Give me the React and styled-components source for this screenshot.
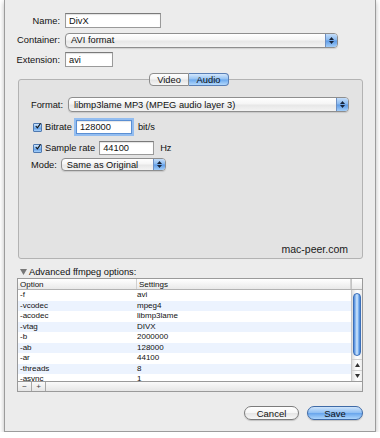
import styled, { createGlobalStyle } from "styled-components";

const GlobalStyle = createGlobalStyle`
  html, body {
    margin: 0;
    padding: 0;
    background: #ffffff;
  }
  body {
    font-family: "Liberation Sans", Arial, sans-serif;
    font-size: 9.3px;
    color: #111;
  }
`;

const Window = styled.div`
  margin-left: 4px;
  width: 370px;
  background: #ececec;
  border: 1px solid #9c9c9c;
  border-top: none;
  box-shadow: 0 2px 5px rgba(0, 0, 0, 0.28);
  padding: 13px 0 11px;
  display: flex;
  flex-direction: column;
`;

const FormGrid = styled.div`
  display: grid;
  grid-template-columns: 55px auto;
  column-gap: 5px;
  row-gap: 4.5px;
  align-items: center;
  justify-items: start;
`;

const Label = styled.label`
  justify-self: end;
  white-space: nowrap;
`;

const TextField = styled.div`
  box-sizing: border-box;
  width: ${(p) => p.$w}px;
  height: ${(p) => p.$h || 15}px;
  background: #fff;
  border: 1px solid #9a9a9a;
  border-top-color: #7a7a7a;
  box-shadow: inset 0 1px 1px rgba(0, 0, 0, 0.12);
  padding-left: 3px;
  display: flex;
  align-items: center;
  ${(p) =>
    p.$focus &&
    `
    border-color: #5b8fd3;
    box-shadow: 0 0 0 2px #93bdf0, inset 0 1px 1px rgba(0,0,0,0.1);
  `}
`;

const PopUp = styled.div`
  box-sizing: border-box;
  width: ${(p) => p.$w}px;
  height: ${(p) => p.$h || 15}px;
  border: 1px solid #8e8e8e;
  border-radius: 4px;
  background: linear-gradient(#ffffff, #f5f5f5 45%, #e7e7e7 55%, #f3f3f3);
  box-shadow: 0 1px 1px rgba(0, 0, 0, 0.12);
  display: flex;
  align-items: stretch;
  overflow: hidden;
`;

const PopText = styled.span`
  flex: 1;
  padding-left: 5px;
  display: flex;
  align-items: center;
  white-space: nowrap;
`;

const PopCap = styled.span`
  width: 11px;
  border-left: 1px solid #6d8fc2;
  background: linear-gradient(#c4ddf9, #86b8f0 48%, #5d9ae6 52%, #a2cdf8);
  display: flex;
  flex-direction: column;
  align-items: center;
  justify-content: center;
  gap: 1px;
`;

const Arrows = () => (
  <>
    <svg width="5" height="3" viewBox="0 0 5 3">
      <path d="M2.5 0 L5 3 L0 3 Z" fill="#17243a" />
    </svg>
    <svg width="5" height="3" viewBox="0 0 5 3">
      <path d="M0 0 L5 0 L2.5 3 Z" fill="#17243a" />
    </svg>
  </>
);

const Select = ({ w, h, children }) => (
  <PopUp $w={w} $h={h}>
    <PopText>{children}</PopText>
    <PopCap>
      <Arrows />
    </PopCap>
  </PopUp>
);

const TabGroup = styled.div`
  margin: 6px 12px 0 13px;
  display: flex;
  flex-direction: column;
`;

const TabBar = styled.div`
  display: flex;
  justify-content: center;
  margin-bottom: -7px;
  position: relative;
  z-index: 1;
  padding-right: 3px;
`;

const Tab = styled.div`
  box-sizing: border-box;
  width: 40px;
  height: 13px;
  display: flex;
  align-items: center;
  justify-content: center;
  border: 1px solid ${(p) => (p.$active ? "#5a7fb5" : "#8c8c8c")};
  border-radius: ${(p) => (p.$active ? "0 4px 4px 0" : "4px 0 0 4px")};
  background: ${(p) =>
    p.$active
      ? "linear-gradient(#d3e7fc, #92c1f3 48%, #6ba8ed 52%, #b2d8fc)"
      : "linear-gradient(#ffffff, #f3f3f3 48%, #e3e3e3 52%, #f5f5f5)"};
  ${(p) => p.$active && "border-left: none;"}
`;

const TabBox = styled.div`
  box-sizing: border-box;
  height: 180px;
  border: 1px solid #b3b3b3;
  border-radius: 3px;
  background: #e3e3e3;
  padding: 17px 13px 2px 12px;
  display: flex;
  flex-direction: column;
`;

const Row = styled.div`
  display: flex;
  align-items: center;
  gap: ${(p) => p.$gap ?? 4}px;
  margin-top: ${(p) => p.$mt || 0}px;
  padding-left: ${(p) => p.$pl || 0}px;
`;

const Unit = styled.span`
  margin-left: 2px;
`;

const Check = styled.span`
  box-sizing: border-box;
  width: 9px;
  height: 9px;
  border: 1px solid #4f79b0;
  border-radius: 1px;
  background: linear-gradient(#cfe5fc, #7fb5ef 50%, #5d9ae6 55%, #a6d0f8);
  display: flex;
  align-items: center;
  justify-content: center;
  margin-right: -1px;
`;

const CheckMark = () => (
  <Check>
    <svg width="8" height="8" viewBox="0 0 8 8" style={{ marginTop: -2, marginLeft: 1 }}>
      <path d="M1 4 L3.2 6.5 L7.5 0.5" stroke="#111" strokeWidth="1.5" fill="none" />
    </svg>
  </Check>
);

const Watermark = styled.div`
  margin-top: auto;
  align-self: flex-end;
  font-size: 10.5px;
  color: #1a1a1a;
  margin-right: 1px;
  padding-bottom: 1px;
`;

const Disclosure = styled.div`
  margin: 7px 0 1px 15px;
  height: 11px;
  display: flex;
  align-items: center;
  gap: 2px;
`;

const TableFrame = styled.div`
  margin: 0 12px 0 12px;
  border: 1px solid #9a9a9a;
  background: #fff;
  display: flex;
  flex-direction: column;
`;

const HeadRow = styled.div`
  display: flex;
  height: 10px;
  border-bottom: 1px solid #b2b2b2;
  background: linear-gradient(#ffffff, #f4f4f4 50%, #e9e9e9);
  font-size: 8px;
`;

const HeadCell = styled.div`
  box-sizing: border-box;
  width: ${(p) => (p.$w ? `${p.$w}px` : "auto")};
  flex: ${(p) => (p.$w ? "none" : 1)};
  padding-left: 2px;
  display: flex;
  align-items: center;
  border-right: 1px solid #d0d0d0;
`;

const Corner = styled.div`
  width: 10px;
  border-left: 1px solid #c4c4c4;
`;

const ListArea = styled.div`
  display: flex;
  height: 91px;
  overflow: hidden;
`;

const Rows = styled.div`
  flex: 1;
  overflow: hidden;
`;

const DataRow = styled.div`
  display: grid;
  grid-template-columns: 117px 1fr;
  height: 10.5px;
  line-height: 10.5px;
  font-size: 8px;
  background: ${(p) => (p.$alt ? "#ecf3fe" : "#ffffff")};
  padding-left: 2px;
`;

const Scrollbar = styled.div`
  width: 10px;
  display: flex;
  flex-direction: column;
  border-left: 1px solid #c8c8c8;
  background: linear-gradient(90deg, #dedede, #f7f7f7 35%, #ffffff 60%, #ececec);
`;

const Track = styled.div`
  flex: 1;
  padding: 3px 1px 0;
`;

const Thumb = styled.div`
  height: 61px;
  border-radius: 5px;
  border: 1px solid #3c6fb8;
  background: linear-gradient(90deg, #4a86da, #a7cdf6 35%, #d6e9fc 50%, #7fb3ef 75%, #3f7dd2);
`;

const ScrollButton = styled.div`
  height: 10px;
  display: flex;
  align-items: center;
  justify-content: center;
  border-top: 1px solid #d0d0d0;
`;

const Footer = styled.div`
  height: 9px;
  border-top: 1px solid #9a9a9a;
  background: linear-gradient(#fafafa, #e6e6e6);
  display: flex;
`;

const FootButton = styled.div`
  width: 13px;
  border-right: 1px solid #a8a8a8;
  display: flex;
  align-items: center;
  justify-content: center;
  font-size: 8px;
  color: #444;
`;

const ButtonRow = styled.div`
  margin: 14px 12px 0 0;
  display: flex;
  justify-content: flex-end;
  gap: 8px;
`;

const PushButton = styled.div`
  box-sizing: border-box;
  width: ${(p) => p.$w}px;
  height: 14px;
  border-radius: 7px;
  display: flex;
  align-items: center;
  justify-content: center;
  font-size: 9.5px;
  border: 1px solid ${(p) => (p.$primary ? "#3f6aa6" : "#7c7c7c")};
  background: ${(p) =>
    p.$primary
      ? "linear-gradient(#cfe4fb, #8fbff3 48%, #68a5ec 52%, #acd5fc)"
      : "linear-gradient(#ffffff, #f6f6f6 48%, #e5e5e5 52%, #f8f8f8)"};
  box-shadow: 0 1px 1px rgba(0, 0, 0, 0.18);
`;

const options = [
  ["-f", "avi"],
  ["-vcodec", "mpeg4"],
  ["-acodec", "libmp3lame"],
  ["-vtag", "DIVX"],
  ["-b", "2000000"],
  ["-ab", "128000"],
  ["-ar", "44100"],
  ["-threads", "8"],
  ["-async", "1"],
];

export default function App() {
  return (
    <>
      <GlobalStyle />
      <Window>
        <FormGrid>
          <Label>Name:</Label>
          <TextField $w={96}>DivX</TextField>
          <Label>Container:</Label>
          <Select w={273}>AVI format</Select>
          <Label>Extension:</Label>
          <TextField $w={48}>avi</TextField>
        </FormGrid>

        <TabGroup>
          <TabBar>
            <Tab>Video</Tab>
            <Tab $active>Audio</Tab>
          </TabBar>
          <TabBox>
            <Row $gap={5}>
              <span>Format:</span>
              <Select w={284}>libmp3lame MP3 (MPEG audio layer 3)</Select>
            </Row>
            <Row $mt={8} $pl={2}>
              <CheckMark />
              <span>Bitrate</span>
              <TextField $w={56} $h={14} $focus>
                128000
              </TextField>
              <Unit>bit/s</Unit>
            </Row>
            <Row $mt={7} $pl={2}>
              <CheckMark />
              <span>Sample rate</span>
              <TextField $w={55} $h={14}>
                44100
              </TextField>
              <Unit>Hz</Unit>
            </Row>
            <Row $mt={3} $gap={4}>
              <span>Mode:</span>
              <Select w={105} h={13}>
                Same as Original
              </Select>
            </Row>
            <Watermark>mac-peer.com</Watermark>
          </TabBox>
        </TabGroup>

        <Disclosure>
          <svg width="7" height="6" viewBox="0 0 7 6">
            <path d="M0 0 L7 0 L3.5 6 Z" fill="#777" />
          </svg>
          <span>Advanced ffmpeg options:</span>
        </Disclosure>

        <TableFrame>
          <HeadRow>
            <HeadCell $w={119}>Option</HeadCell>
            <HeadCell>Settings</HeadCell>
            <Corner />
          </HeadRow>
          <ListArea>
            <Rows>
              {options.map(([opt, val], i) => (
                <DataRow key={opt} $alt={i % 2 === 1}>
                  <span>{opt}</span>
                  <span>{val}</span>
                </DataRow>
              ))}
            </Rows>
            <Scrollbar>
              <Track>
                <Thumb />
              </Track>
              <ScrollButton>
                <svg width="5" height="4" viewBox="0 0 5 4">
                  <path d="M2.5 0 L5 4 L0 4 Z" fill="#333" />
                </svg>
              </ScrollButton>
              <ScrollButton>
                <svg width="5" height="4" viewBox="0 0 5 4">
                  <path d="M0 0 L5 0 L2.5 4 Z" fill="#333" />
                </svg>
              </ScrollButton>
            </Scrollbar>
          </ListArea>
          <Footer>
            <FootButton>−</FootButton>
            <FootButton>+</FootButton>
          </Footer>
        </TableFrame>

        <ButtonRow>
          <PushButton $w={55}>Cancel</PushButton>
          <PushButton $w={56} $primary>
            Save
          </PushButton>
        </ButtonRow>
      </Window>
    </>
  );
}
